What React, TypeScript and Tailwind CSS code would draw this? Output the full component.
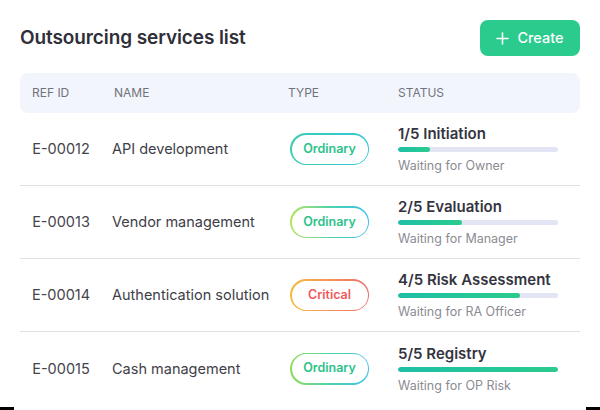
import React from 'react';

type Row = {
  id: string;
  name: string;
  type: 'Ordinary' | 'Critical';
  border: string;
  step: string;
  progress: number;
  waiting: string;
};

const rows: Row[] = [
  {
    id: 'E-00012',
    name: 'API development',
    type: 'Ordinary',
    border: 'bg-gradient-to-r from-[#3ccdb0] to-[#36c7d8]',
    step: '1/5 Initiation',
    progress: 20,
    waiting: 'Waiting for Owner',
  },
  {
    id: 'E-00013',
    name: 'Vendor management',
    type: 'Ordinary',
    border: 'bg-gradient-to-r from-[#b4e35a] via-[#4fd3a8] to-[#3bbff0]',
    step: '2/5 Evaluation',
    progress: 40,
    waiting: 'Waiting for Manager',
  },
  {
    id: 'E-00014',
    name: 'Authentication solution',
    type: 'Critical',
    border: 'bg-gradient-to-r from-[#f6bb3a] to-[#f06a6a]',
    step: '4/5 Risk Assessment',
    progress: 76,
    waiting: 'Waiting for RA Officer',
  },
  {
    id: 'E-00015',
    name: 'Cash management',
    type: 'Ordinary',
    border: 'bg-gradient-to-r from-[#8fdc55] via-[#4fd3a8] to-[#3ec3ea]',
    step: '5/5 Registry',
    progress: 100,
    waiting: 'Waiting for OP Risk',
  },
];

const TypePill: React.FC<{ row: Row }> = ({ row }) => (
  <div className={`w-fit rounded-full p-[1.5px] ${row.border}`}>
    <div
      className={`flex h-[29px] w-[76px] items-center justify-center rounded-full bg-white text-[12.5px] font-semibold ${
        row.type === 'Critical' ? 'text-[#ee5a5a]' : 'text-[#2cc28a]'
      }`}
    >
      {row.type}
    </div>
  </div>
);

const App: React.FC = () => {
  return (
    <div
      className="flex h-[410px] w-[600px] flex-col bg-white"
      style={{ fontFamily: 'Inter, "Noto Sans", sans-serif' }}
    >
      <div className="flex items-center justify-between px-5 pt-5">
        <h1 className="text-[19px] font-semibold tracking-[-0.1px] text-[#2f2f3a]">
          Outsourcing services list
        </h1>
        <button className="flex h-9 w-[100px] items-center justify-center gap-2 rounded-lg bg-[#2bcb8d] text-[14.5px] font-medium text-white">
          <svg width="13" height="13" viewBox="0 0 13 13" fill="none">
            <path d="M6.5 1v11M1 6.5h11" stroke="white" strokeWidth="1.6" strokeLinecap="round" />
          </svg>
          Create
        </button>
      </div>

      <div className="mx-5 mt-[17px]">
        <div className="flex h-10 items-center rounded-lg bg-[#f3f5fc] text-[12px] text-[#70737d]">
          <div className="w-[94px] pl-3">REF ID</div>
          <div className="w-[174px]">NAME</div>
          <div className="w-[110px]">TYPE</div>
          <div>STATUS</div>
        </div>

        {rows.map((row, i) => (
          <div
            key={row.id}
            className={`flex h-[73px] items-center ${
              i < rows.length - 1 ? 'border-b border-[#e1e1e4]' : ''
            }`}
          >
            <div className="w-[82px] text-center text-[14.5px] text-[#44444c]">{row.id}</div>
            <div className="w-[186px] pl-[10px] text-[14.5px] text-[#3e3e48]">{row.name}</div>
            <div className="w-[110px] pl-[2px]">
              <TypePill row={row} />
            </div>
            <div className="flex w-[160px] flex-col pt-[2px]">
              <div className="text-[15px] font-semibold leading-5 text-[#34343f]">{row.step}</div>
              <div className="mt-[3px] h-[5px] w-[160px] overflow-hidden rounded-full bg-[#e3e5f4]">
                <div
                  className="h-full rounded-full bg-gradient-to-r from-[#1ebfa6] to-[#2bcb8d]"
                  style={{ width: `${row.progress}%` }}
                />
              </div>
              <div className="mt-[5px] text-[12.5px] text-[#8b8b92]">{row.waiting}</div>
            </div>
          </div>
        ))}
      </div>

      <div className="mt-auto flex justify-between">
        <div className="h-[3px] w-[14px] bg-black" />
        <div className="h-[3px] w-[14px] bg-black" />
      </div>
    </div>
  );
};

export default App;
